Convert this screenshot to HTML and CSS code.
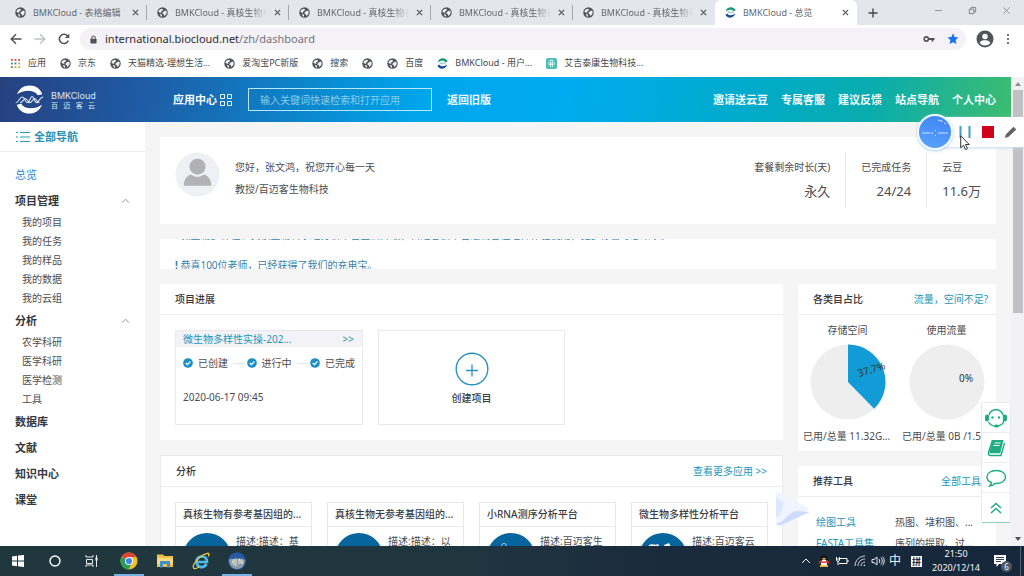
FILE: index.html
```html
<!DOCTYPE html>
<html lang="zh-CN">
<head>
<meta charset="utf-8">
<title>BMKCloud - 总览</title>
<link rel="stylesheet" href="styles.css">
</head>
<body>
<svg class="defs" aria-hidden="true">
  <symbol id="globe" viewBox="0 0 16 16"><circle cx="8" cy="8" r="7.6" fill="#50545a"/><path d="M3 4.5 6.5 2.500 9 3.500 7.800 5.500 6 6.200 6.500 8 4.500 8.300 2 7zM9.500 6.500l3-1.500 1.800 2-1 3.500-2.500 2.500-1-2.500-2.300-1.500zM4 10l3 .800.500 2.700-1.500.700z" fill="#edf0f3"/></symbol>
  <symbol id="brand" viewBox="0 0 16 16"><path d="M1 6.500C2 2.500 5 .5 8.500.5c3.500 0 6 2 6.800 5L12 6C10.500 3.500 5 3 1 6.500z" fill="#159a72"/><path d="M15 9.500c-1 4-4 6-7.500 6-3.500 0-6-2-6.800-5L4 10c1.500 2.500 7 3 11-.500z" fill="#1749a0"/><path d="M3.500 9 6 6.700 8 9l2-2.300L12.500 9" fill="none" stroke="#2b8dae"/></symbol>
  <symbol id="close" viewBox="0 0 8 8"><path d="M1 1l6 6M7 1 1 7" stroke="currentColor" stroke-width="1.300"/></symbol>
  <symbol id="check" viewBox="0 0 12 12"><circle cx="6" cy="6" r="5.800" fill="#1b8fc6"/><path d="M3.300 6 5.300 8l3.600-3.800" fill="none" stroke="#fff" stroke-width="1.500"/></symbol>
  <symbol id="up" viewBox="0 0 10 6"><path d="M1 5l4-4 4 4" fill="none" stroke="currentColor"/></symbol>
</svg>

<header class="browser">
  <nav class="tabs" aria-label="标签页">
    <div class="tab"><svg class="fav"><use href="#globe"/></svg><span class="tab-name">BMKCloud - 表格编辑</span><button class="tab-close" aria-label="关闭"><svg><use href="#close"/></svg></button></div>
    <div class="tab"><svg class="fav"><use href="#globe"/></svg><span class="tab-name">BMKCloud - 真核生物有</span><button class="tab-close" aria-label="关闭"><svg><use href="#close"/></svg></button></div>
    <div class="tab"><svg class="fav"><use href="#globe"/></svg><span class="tab-name">BMKCloud - 真核生物有</span><button class="tab-close" aria-label="关闭"><svg><use href="#close"/></svg></button></div>
    <div class="tab"><svg class="fav"><use href="#globe"/></svg><span class="tab-name">BMKCloud - 真核生物有</span><button class="tab-close" aria-label="关闭"><svg><use href="#close"/></svg></button></div>
    <div class="tab last"><svg class="fav"><use href="#globe"/></svg><span class="tab-name">BMKCloud - 真核生物有</span><button class="tab-close" aria-label="关闭"><svg><use href="#close"/></svg></button></div>
    <div class="tab active"><svg class="fav"><use href="#brand"/></svg><span class="tab-name">BMKCloud - 总览</span><button class="tab-close" aria-label="关闭"><svg><use href="#close"/></svg></button></div>
    <button class="new-tab" aria-label="新标签页"><svg viewBox="0 0 10 10"><path d="M5 .5v9M.5 5h9" stroke="#45494d" stroke-width="1.400"/></svg></button>
    <div class="window-controls">
      <button aria-label="最小化"><svg viewBox="0 0 10 10"><path d="M1 5h8" stroke="#8b8f94"/></svg></button>
      <button aria-label="还原"><svg viewBox="0 0 10 10"><path d="M1.500 3.500h5v5h-5zM3.500 3.500v-2h5v5h-2" fill="none" stroke="#777b80"/></svg></button>
      <button aria-label="关闭窗口"><svg viewBox="0 0 10 10"><path d="M1.500 1.500l7 7M8.500 1.500l-7 7" stroke="#8b8f94"/></svg></button>
    </div>
  </nav>
  <div class="address-row">
    <button class="nav-btn" aria-label="后退"><svg viewBox="0 0 12 12"><path d="M11.500 6H1.500M6 1.200 1.200 6 6 10.800" fill="none" stroke="#4d5156" stroke-width="1.400"/></svg></button>
    <button class="nav-btn" aria-label="前进"><svg viewBox="0 0 12 12"><path d="M.5 6h10M6 1.200 10.800 6 6 10.800" fill="none" stroke="#bfc2c6" stroke-width="1.400"/></svg></button>
    <button class="nav-btn" aria-label="重新加载"><svg viewBox="0 0 12 12"><path d="M10.300 7.500A4.600 4.600 0 1 1 9.500 3" fill="none" stroke="#4d5156" stroke-width="1.500"/><path d="M11.300.500v4.400H6.900z" fill="#4d5156"/></svg></button>
    <div class="omnibox">
      <svg class="lock" viewBox="0 0 8 10"><path d="M2 4.500V3a2 2 0 0 1 4 0v1.500" fill="none" stroke="#50545a" stroke-width="1.200"/><rect x=".5" y="4" width="7" height="5.500" rx=".7" fill="#50545a"/></svg>
      <span class="url">international.biocloud.net<span class="url-path">/zh/dashboard</span></span>
      <svg class="key" viewBox="0 0 12 8"><circle cx="3.300" cy="4" r="2.100" fill="none" stroke="#50545a" stroke-width="1.600"/><path d="M5.500 4H11.500M9.500 4v2.500" stroke="#50545a" stroke-width="1.800"/></svg>
      <svg class="star" viewBox="0 0 12 12"><path d="M6 .3l1.600 3.700 4 .4-3 2.700.8 4L6 9.200l-3.400 1.900.8-4-3-2.700 4-.4z" fill="#1a73e8"/></svg>
    </div>
    <button class="profile" aria-label="用户"><svg viewBox="0 0 18 18"><circle cx="9" cy="9" r="8.500" fill="#50545a"/><circle cx="9" cy="6.500" r="2.700" fill="#fff"/><path d="M3.700 13.200C4.500 10.500 7 10.300 9 10.300s4.500.200 5.300 2.900A7 7 0 0 1 9 15.500a7 7 0 0 1-5.300-2.300z" fill="#fff"/></svg></button>
    <button class="menu" aria-label="菜单"><svg viewBox="0 0 4 12"><circle cx="2" cy="2" r="1.100"/><circle cx="2" cy="6" r="1.100"/><circle cx="2" cy="10" r="1.100"/></svg></button>
  </div>
  <nav class="bookmarks" aria-label="书签">
    <a href="#"><svg class="apps" viewBox="0 0 12 12"><path d="M1 1h2v2H1zM5 1h2v2H5zM9 1h2v2H9z" fill="#d5483c"/><path d="M1 5h2v2H1z" fill="#389a5a"/><path d="M5 5h2v2H5z" fill="#2f77d4"/><path d="M9 5h2v2H9z" fill="#e0a02c"/><path d="M1 9h2v2H1z" fill="#389a5a"/><path d="M5 9h2v2H5zM9 9h2v2H9z" fill="#dda02e"/></svg>应用</a>
    <a href="#"><svg><use href="#globe"/></svg>京东</a>
    <a href="#"><svg><use href="#globe"/></svg>天猫精选-理想生活...</a>
    <a href="#"><svg><use href="#globe"/></svg>爱淘宝PC新版</a>
    <a href="#"><svg><use href="#globe"/></svg>搜索</a>
    <a href="#" aria-label="书签"><svg><use href="#globe"/></svg></a>
    <a href="#"><svg><use href="#globe"/></svg>百度</a>
    <a href="#"><svg><use href="#brand"/></svg>BMKCloud - 用户...</a>
    <a href="#"><svg viewBox="0 0 12 12"><rect width="12" height="12" rx="2" fill="#50bdb5"/><path d="M4.500 2.500h3v3h-3zM5 5.500v4.500M7 5.500v4.500M3 5v2h6V5" fill="none" stroke="#e5f8f5"/></svg>艾吉泰康生物科技...</a>
  </nav>
</header>

<div class="viewport">
  <div class="page">
    <header class="site-header">
      <a class="logo" href="#" aria-label="BMKCloud 百迈客云">
        <svg viewBox="0 0 28 28"><path d="M2 9C4 3.500 8.500.5 14 .5c6 0 10.500 3.200 12.300 8.500L22 10C19 4.500 9 4 2 9zM26 19c-2 5.500-6.500 8.500-12 8.500-6 0-10.500-3.200-12.300-8.500L6 18c3 5.500 13 6 20 1z" fill="#fff"/><path d="M.8 17c3 0 3.500-5.500 6.200-5.500S9.500 17 12 17s2.500-6 4.500-6 2 6 4.500 6 2.500-5.500 6.200-5.500M5 17c2.500 0 3.500-4 5-4s2.500 4 4.500 4 3-4 4.500-4 2.500 4 4.500 4" fill="none" stroke="#dfeaf6"/></svg>
        <span class="logo-text"><span class="logo-en">BMKCloud</span><span class="logo-cn"><i>百</i><i>迈</i><i>客</i><i>云</i></span></span>
      </a>
      <a class="app-center" href="#">应用中心 <svg viewBox="0 0 12 12"><path d="M.5.5h4v4h-4zM7.500.5h4v4h-4zM.5 7.500h4v4h-4zM7.500 7.500h4v4h-4z" fill="none" stroke="#e6f7ff"/></svg></a>
      <input class="search" type="text" placeholder="输入关键词快速检索和打开应用" aria-label="搜索应用">
      <a class="old-version" href="#">返回旧版</a>
      <nav class="site-links">
        <a href="#">邀请送云豆</a><a href="#">专属客服</a><a href="#">建议反馈</a><a href="#">站点导航</a><a href="#">个人中心</a>
      </nav>
    </header>
    <div class="body">
      <aside class="sidebar">
        <a class="all-nav" href="#"><svg viewBox="0 0 14 12"><path d="M0 1.500h2M4 1.500h10M0 6h2M4 6h10M0 10.500h2M4 10.500h10" stroke="#2a9abb" stroke-width="1.200"/></svg>全部导航</a>
        <nav class="side-nav">
          <a class="leaf current" href="#">总览</a>
          <button class="group">项目管理<svg><use href="#up"/></svg></button>
          <a class="sub" href="#">我的项目</a><a class="sub" href="#">我的任务</a><a class="sub" href="#">我的样品</a><a class="sub" href="#">我的数据</a><a class="sub" href="#">我的云组</a>
          <button class="group">分析<svg><use href="#up"/></svg></button>
          <a class="sub" href="#">农学科研</a><a class="sub" href="#">医学科研</a><a class="sub" href="#">医学检测</a><a class="sub" href="#">工具</a>
          <a class="leaf" href="#">数据库</a><a class="leaf" href="#">文献</a><a class="leaf" href="#">知识中心</a><a class="leaf" href="#">课堂</a>
        </nav>
      </aside>
      <main class="main">
        <section class="card welcome">
          <svg class="avatar" viewBox="0 0 46 46"><circle cx="23" cy="23" r="22.500" fill="#eff0f3"/><circle cx="23" cy="15" r="8.200" fill="#b2b2b4"/><path d="M9 34.500c0-6 3-10.500 7.500-11.500 4 3.200 9 3.200 13 0 4.500 1 7.500 5.500 7.500 11.500z" fill="#b2b2b4"/></svg>
          <div class="greeting"><p>您好，张文鸿，祝您开心每一天</p><p>教授/百迈客生物科技</p></div>
          <dl class="stats">
            <div class="right"><dt>套餐剩余时长(天)</dt><dd>永久</dd></div>
            <div class="right"><dt>已完成任务</dt><dd>24/24</dd></div>
            <div><dt>云豆</dt><dd>11.6万</dd></div>
          </dl>
        </section>
        <section class="card notice">
          <ul>
            <li><b>!</b> 微生物多样性、真核生物转录组分析平台全新升级，百迈客云平台邀请各位老师体验使用，更多惊喜等您来拿。</li>
            <li><b>!</b> 恭喜100位老师，已经获得了我们的充电宝。</li>
          </ul>
        </section>
        <div class="columns">
          <div class="column">
            <section class="card progress">
              <h2 class="card-head">项目进展</h2>
              <div class="projects">
                <article class="project">
                  <a class="project-head" href="#"><span>微生物多样性实操-202...</span><span>&gt;&gt;</span></a>
                  <ol class="steps"><li><svg><use href="#check"/></svg>已创建</li><li><svg><use href="#check"/></svg>进行中</li><li><svg><use href="#check"/></svg>已完成</li></ol>
                  <time>2020-06-17 09:45</time>
                </article>
                <button class="project create"><svg viewBox="0 0 34 34"><circle cx="17" cy="17" r="15.800" fill="none" stroke="#2a94bd" stroke-width="1.400"/><path d="M17 12.500v12M11 18.500h12" stroke="#2a94bd" stroke-width="1.300"/></svg>创建项目</button>
              </div>
            </section>
            <section class="card analysis">
              <h2 class="card-head">分析<a href="#">查看更多应用 &gt;&gt;</a></h2>
              <div class="platforms">
                <article class="platform"><h3>真核生物有参考基因组的...</h3><div class="platform-body"><svg viewBox="0 0 48 48"><circle cx="24" cy="24" r="24" fill="#06659c"/><path d="M12 18c4-6 8-4 12 0s9 4 13-2" fill="none" stroke="#1c577d" stroke-width="2"/></svg><p>描述:描述：基</p></div></article>
                <article class="platform"><h3>真核生物无参考基因组的...</h3><div class="platform-body"><svg viewBox="0 0 48 48"><circle cx="24" cy="24" r="24" fill="#06659c"/></svg><p>描述:描述：以</p></div></article>
                <article class="platform"><h3>小RNA测序分析平台</h3><div class="platform-body"><svg viewBox="0 0 48 48"><circle cx="24" cy="24" r="24" fill="#06659c"/><path d="M15 14c-2-4 5-5 4-1s-2 3-1 6 5 3 6 6" fill="none" stroke="#b6d7e8"/></svg><p>描述:百迈客生</p></div></article>
                <article class="platform"><h3>微生物多样性分析平台</h3><div class="platform-body"><svg viewBox="0 0 48 48"><circle cx="24" cy="24" r="24" fill="#06659c"/><path d="M10 12c4-2 6 1 9-1l3 5-8 5-5-3zM25 12l5-2 3 6-4 6z" fill="#f4fafd"/></svg><p>描述:百迈客云</p></div></article>
              </div>
            </section>
          </div>
          <div class="column">
            <section class="card usage">
              <h2 class="card-head">各类目占比<a href="#">流量，空间不足?</a></h2>
              <div class="charts">
                <figure><p>存储空间</p><svg viewBox="0 0 76 76"><circle cx="38" cy="38" r="37.500" fill="#eeeeef"/><path d="M38 38V.5A37.500 37.500 0 0 1 64.200 64.800z" fill="#129bd7"/><text x="49" y="33" transform="rotate(-17 49 33)">37.7%</text></svg><figcaption>已用/总量 11.32G...</figcaption></figure>
                <figure><p>使用流量</p><svg viewBox="0 0 76 76"><circle cx="38" cy="38" r="37.500" fill="#eeeeef"/><text x="50" y="38">0%</text></svg><figcaption>已用/总量 0B /1.5...</figcaption></figure>
              </div>
            </section>
            <section class="card tools">
              <h2 class="card-head">推荐工具<a href="#">全部工具</a></h2>
              <ul><li><a href="#">绘图工具</a><span>热图、堆积图、...</span></li><li><a href="#">FASTA工具集</a><span>序列的提取、过...</span></li></ul>
            </section>
          </div>
        </div>
      </main>
    </div>
    <svg class="watermark" viewBox="0 0 200 36" aria-hidden="true"><path d="M0 0 34 18 0 34z" fill="#f0f4fe"/><path d="M0 32c8 1 10-9 20-12l14 1L3 35z" fill="#cbdcfd"/><path d="M0 6v20c6-1 6-10 8-14z" fill="#dce8fe"/><path d="M36 3h9v2h-9zM53 3h7v2h-7zM88 3h9v2h-9zM125 3h8v2h-8zM138 3h12v2h-12zM66 3h4v2h-4zM61 24h5v3h-5zM70 29h4v3h-4zM121 25h5v2h-5zM138 25h3v2h-3zM150 29h5v2h-5z" fill="#fff"/></svg>
    <div class="floating">
      <button aria-label="客服"><svg viewBox="0 0 22 22"><path d="M4 8a7.300 7.300 0 0 1 14 0M3.500 15A8 8 0 0 0 11 19" fill="none" stroke="#1fac80" stroke-width="1.300"/><path d="M18.500 8v6.500c0 2.500-4 4-6.500 4.500" fill="none" stroke="#1fac80" stroke-width="1.300"/><rect y="7.500" width="4" height="7" rx="2" fill="#1fac80"/><rect x="18" y="7.500" width="4" height="7" rx="2" fill="#1fac80"/><circle cx="7.500" cy="10.500" r="1.200" fill="#1fac80"/><circle cx="14" cy="10.500" r="1.200" fill="#1fac80"/><ellipse cx="11.500" cy="19" rx="2.500" ry="1.500" fill="#1fac80"/></svg></button>
      <button aria-label="文档"><svg viewBox="0 0 22 22"><path d="M7.500 3h11L15.500 15H4.500z" fill="#1fac80"/><path d="M7.500 3 3.500 15.500c-.5 2 .5 3 2 3H16L19.500 6M4.500 15.500H15.500" fill="none" stroke="#1fac80" stroke-width="1.400"/><path d="M9.500 6h6M8.500 8.500h6" stroke="#fff" stroke-width="1.200"/></svg></button>
      <button aria-label="留言"><svg viewBox="0 0 22 22"><path d="M6.500 15.500C3 14.500 2 12 2 10c0-4 4-6.500 9.300-6.500S20.500 6 20.500 10s-4 6.500-9.200 6.500h-1.500C8.500 18 6.500 19 4.500 19c1.200-1 2-2 2-3.500z" fill="none" stroke="#1fac80" stroke-width="1.400"/></svg></button>
      <button aria-label="返回顶部"><svg viewBox="0 0 22 22"><path d="M6 11l5-4.500 5 4.500M6 16l5-4.500 5 4.500" fill="none" stroke="#1fac80" stroke-width="1.500"/></svg></button>
    </div>
  </div>
  <div class="scrollbar" aria-hidden="true"><svg viewBox="0 0 8 6"><path d="M1 5l3-4 3 4z" fill="#8d8d90"/></svg><div class="track"><div class="thumb"></div></div><svg viewBox="0 0 8 6"><path d="M1 1l3 4 3-4z" fill="#505052"/></svg></div>
  <div class="recorder">
    <div class="timer"><svg viewBox="0 0 32 32"><path d="M3 17h8M12 17h2M19 17h10M16.500 14v1M16.500 19v1M19 4l5 1.500M25 7l2 1" stroke="#cfe4ff" fill="none"/></svg></div>
    <button aria-label="暂停"><svg viewBox="0 0 12 12"><path d="M1.500 0v12M10.500 0v12" stroke="#3ba1bf" stroke-width="2"/></svg></button>
    <button aria-label="停止"><svg viewBox="0 0 12 12"><path d="M0 0h12v12H0z" fill="#d0021b"/></svg></button>
    <button aria-label="标注"><svg viewBox="0 0 12 12"><path d="M0 12l.8-3.500L8.500.8l2.800 2.700-8 7.500z" fill="#606267"/></svg></button>
    <svg class="cursor" viewBox="0 0 10 16"><path d="M.7.8v12l2.800-2.600 2 4.500 2-1-2-4.200h3.800z" fill="#fff" stroke="#333"/></svg>
  </div>
</div>

<footer class="taskbar">
  <div class="launchers">
    <button aria-label="开始"><svg viewBox="0 0 18 18"><path d="M3 4.500l5-.700v4.700H3zM9 3.600 15 3v5.500H9zM3 9.500h5v4.700l-5-.700zM9 9.500h6V15l-6-.700z" fill="#fff"/></svg></button>
    <button aria-label="搜索"><svg viewBox="0 0 18 18"><circle cx="9" cy="9" r="5" fill="none" stroke="#fff" stroke-width="1.400"/></svg></button>
    <button aria-label="任务视图"><svg viewBox="0 0 18 18"><path d="M3 3v2h7V3M3.500 7.500h6v4h-6zM3 15v-2h7v2M13.500 3v12" fill="none" stroke="#e5eaec"/><path d="M12.500 5.500h2v3h-2z" fill="#fff"/></svg></button>
    <button class="running" aria-label="Chrome"><svg viewBox="0 0 18 18"><circle cx="9" cy="9" r="8.500" fill="#f2bf2e"/><path d="M9 9 1.600 4.700A8.500 8.500 0 0 1 16.400 5H9z" fill="#dc4437"/><path d="M1.600 4.700A8.500 8.500 0 0 0 8.500 17.500L12 11z" fill="#2b9d56"/><circle cx="9" cy="9" r="4" fill="#fff"/><circle cx="9" cy="9" r="3.100" fill="#4285e8"/></svg></button>
    <button aria-label="文件资源管理器"><svg viewBox="0 0 18 18"><path d="M1 2.500h6l1.500 1.500H17v11H1z" fill="#f4bf42"/><path d="M1 6h16v6H1z" fill="#fbd978"/><path d="M4 9h10v6.500h-3V12H7v3.500H4z" fill="#3b91c9"/></svg></button>
    <button aria-label="Internet Explorer"><svg viewBox="0 0 18 18"><path d="M14.500 12c-3 5-10 3.500-10-2.500C4.500 3 15 2.500 15 10H5" fill="none" stroke="#4fbbe9" stroke-width="2.700"/><path d="M2 16.500C-1 14 7 3 15.500 1.300c2.200-.300 1.500 2 .7 3.200M2 16.500c1.500.700 3.500-.500 5-1.500" fill="none" stroke="#e8c94a" stroke-width="1.300"/></svg></button>
    <button class="running" aria-label="录屏"><svg viewBox="0 0 18 18"><circle cx="9" cy="9" r="8.800" fill="#2b5aa5"/><path d="M1 8c3-3 5 1 8-1s5 0 8 1c0 5-3 9-8 9S1 13 1 8z" fill="#8b9eae"/><path d="M4 11l2-4v6M8 6v8M11 12V7l3 5V7" fill="none" stroke="#f3ead0"/></svg></button>
  </div>
  <div class="tray">
    <svg class="small" viewBox="0 0 10 10"><path d="M1 7l4-4 4 4" fill="none" stroke="#fff"/></svg>
    <svg viewBox="0 0 14 14"><ellipse cx="7" cy="6" rx="4" ry="5" fill="#15171a"/><ellipse cx="7" cy="9" rx="3" ry="3.500" fill="#fff"/><path d="M3 6c3 2 5 2 8 0v2c-3 1.500-5 1.500-8 0z" fill="#df3328"/><ellipse cx="7" cy="4.800" rx="2" ry=".8" fill="#f4b83b"/><path d="M3 12h3.500M7.500 12H11" stroke="#f4b83b" stroke-width="1.800"/><path d="M3 7l-1 3M11 7l1 3" stroke="#df3328"/></svg>
    <svg viewBox="0 0 14 14"><path d="M5 4.500h7v5H4M13 6v2" fill="none" stroke="#fff"/><path d="M1.500 3v3.500c0 1 3 1 3 0V3M1 5h4M3 7v4" fill="none" stroke="#fff"/></svg>
    <svg viewBox="0 0 14 14"><path d="M2 12C2 6.500 6.500 2 12 2M5 12c0-4 3-7 7-7M8 12c0-2.500 2-4 4-4" fill="none" stroke="#c8d0d6"/><path d="M10.500 12a1.500 1.500 0 0 1 1.500-1.500V12z" fill="#fff"/></svg>
    <svg viewBox="0 0 14 14"><path d="M1 5.500h2L6 3v8L3 8.500H1zM8 5c1 1 1 3 0 4M9.800 3.500c2 2 2 5 0 7M11.700 2.500c2 3 2 6 0 9" fill="none" stroke="#e7ecf0"/></svg>
    <span class="ime">中</span><span class="ime-mode">拼</span>
    <div class="clock"><time>21:50</time><time>2020/12/14</time></div>
    <button class="notifications" aria-label="6 条通知"><svg viewBox="0 0 14 14"><path d="M1 1h12v9H6l-2.500 3v-3H1z" fill="#fff"/><path d="M3 3.500h8M3 5.500h8M3 7.500h5" stroke="#33404d"/></svg><span>6</span></button>
  </div>
</footer>
</body>
</html>
```
FILE: styles.css
```css
* { box-sizing: border-box; }
body {
  margin: 0;
  height: 100vh;
  display: flex;
  flex-direction: column;
  overflow: hidden;
  font-family: "Noto Sans", "Noto Sans CJK SC", sans-serif;
  font-size: 10px;
  line-height: 16px;
  color: #4c4c4f;
  background: #fff;
}
a { color: inherit; text-decoration: none; }
button { font: inherit; color: inherit; background: none; border: 0; padding: 0; }
p, h2, h3, ul, ol, dl, dd, figure { margin: 0; padding: 0; }
ul, ol { list-style: none; }
svg { display: block; flex: none; }
.defs { display: none; }

/* Browser chrome */
.browser { flex: none; font-size: 9px; }
.tabs { display: flex; height: 25px; padding-left: 5px; background: #e3e7eb; }
.tab { flex: 0 1 142px; display: flex; align-items: center; gap: 7px; min-width: 0; padding: 0 8px 0 10px; color: #65686d; position: relative; }
.tab:not(.active):not(.last)::after { content: ""; width: 1px; height: 15px; background: #a4a8ad; position: absolute; right: 0; }
.fav { width: 11px; height: 11px; }
.tab-name { flex: 1; overflow: hidden; white-space: nowrap; mask-image: linear-gradient(90deg, #000 82%, transparent); }
.tab:first-child .tab-name, .tab.active .tab-name { mask-image: none; }
.tab-close svg { width: 7px; height: 7px; color: #505459; }
.tab.active { background: #fff; border-radius: 6px 6px 0 0; }
.new-tab { width: 32px; display: grid; place-items: center; }
.new-tab svg { width: 10px; height: 10px; }
.window-controls { margin-left: auto; display: flex; align-items: center; gap: 25px; padding: 0 13px 4px 0; }
.window-controls svg { width: 9px; height: 9px; }
.address-row { display: flex; align-items: center; height: 28px; padding: 0 14px 0 10px; gap: 12px; }
.nav-btn svg { width: 12px; height: 12px; }
.omnibox { flex: 1; height: 22px; margin-left: -2px; padding: 0 7px 0 10px; display: flex; align-items: center; border-radius: 11px; background: #f5f2f7; }
.lock { width: 7px; height: 9px; margin-right: 8px; }
.url { flex: 1; font-size: 11px; color: #2b2d30; }
.url-path { color: #717479; }
.key { width: 12px; height: 8px; margin-right: 12px; }
.star { width: 12px; height: 12px; }
.profile { margin-left: -2px; }
.profile svg { width: 18px; height: 18px; }
.menu svg { width: 4px; height: 12px; fill: #50545a; }
.bookmarks { display: flex; align-items: center; gap: 14px; height: 24px; padding: 0 10px 4px; color: #45474a; white-space: nowrap; }
.bookmarks a { display: flex; align-items: center; gap: 7px; }
.bookmarks svg { width: 11px; height: 11px; }

/* Page frame */
.viewport { flex: 1; min-height: 0; display: flex; position: relative; }
.page { flex: 1; min-width: 0; display: flex; flex-direction: column; overflow: hidden; position: relative; }
.site-header {
  flex: none; height: 45px; padding: 0 15px; display: flex; align-items: center;
  font-size: 11px; font-weight: 700; color: #f4fbff;
  background: linear-gradient(100deg, #26417f 0%, #1f5ba4 14%, #0c86cc 30%, #00a6ec 42%, #00abef 56%, #00abca 74%, #09acad 86%, #3ebc70 100%);
}
.logo { display: flex; align-items: center; gap: 7px; width: 158px; font-weight: 400; color: #dce8f4; }
.logo svg { width: 29px; height: 29px; }
.logo-text { width: 44px; }
.logo-en { display: block; font: 9px/11px Inter, sans-serif; }
.logo-cn { display: flex; justify-content: space-between; font-size: 7px; line-height: 9px; }
.logo-cn i { font-style: normal; }
.app-center { display: flex; align-items: center; gap: 3px; width: 75px; }
.app-center svg { width: 12px; height: 12px; }
.search { width: 184px; height: 23px; padding: 0 11px; border: 1px solid #b9e8fb; border-radius: 0; outline: 0; background: transparent; font: 10px/16px "Noto Sans", "Noto Sans CJK SC", sans-serif; color: #fff; }
.search::placeholder { color: #8ccbe9; opacity: 1; }
.old-version { margin-left: 15px; }
.site-links { margin-left: auto; display: flex; gap: 13px; }
.body { flex: 1; min-height: 0; display: flex; background: #f5f5f6; }
.sidebar { flex: none; width: 145px; background: #fff; }
.all-nav { display: flex; align-items: center; gap: 4px; height: 30px; padding-left: 16px; border-bottom: 1px solid #ececee; font-size: 11px; font-weight: 700; color: #2c92b4; }
.all-nav svg { width: 14px; height: 12px; }
.side-nav { display: flex; flex-direction: column; padding: 10px 15px; font-size: 11px; }
.leaf { line-height: 26px; font-weight: 700; color: #36373a; }
.leaf.current { font-weight: 400; color: #2b86cf; }
.group { display: flex; align-items: center; justify-content: space-between; height: 25px; font-weight: 700; color: #36373a; }
.group svg { width: 9px; height: 6px; color: #8e8e92; }
.sub { padding-left: 7px; font-size: 10px; line-height: 19px; }
.main { flex: 1; min-width: 0; padding: 15px; display: flex; flex-direction: column; gap: 15px; }
.card { background: #fff; }

/* Welcome */
.welcome { flex: none; height: 87px; padding: 15px; display: flex; align-items: flex-start; }
.avatar { width: 45px; height: 45px; margin-right: 15px; }
.greeting p { line-height: 22px; }
.greeting { margin-top: 4px; }
.stats { margin-left: auto; display: flex; }
.stats div { height: 56px; padding: 4px 15px 0; border-left: 1px solid #e8eaec; }
.stats div:first-child { border-left: 0; }
.stats div:last-child { padding-right: 0; }
.stats .right { text-align: right; }
.stats dt { line-height: 22px; }
.stats dd { font-size: 13px; line-height: 26px; }
.notice { flex: none; height: 30px; padding: 0 15px; overflow: hidden; color: #367fa6; }
.notice ul { margin-top: -19px; }
.notice li { line-height: 30px; height: 30px; white-space: nowrap; overflow: hidden; }

/* Card columns */
.columns { display: grid; grid-template-columns: minmax(0, 1fr) 198px; gap: 15px; align-items: start; }
.column { display: flex; flex-direction: column; gap: 15px; }
.card-head { display: flex; justify-content: space-between; height: 31px; padding: 0 15px; border-bottom: 1px solid #ebecee; font-size: 10px; font-weight: 500; line-height: 31px; color: #36373a; }
.card-head a { font-weight: 400; color: #2595b8; }
.usage .card-head { padding-right: 8px; }
.projects { display: grid; grid-template-columns: 188px 187px; gap: 15px; padding: 15px; }
.project { height: 95px; border: 1px solid #e9e8ed; }
.project-head { display: flex; justify-content: space-between; padding: 0 8px 0 7px; background: #f3f2f6; color: #2595b8; }
.steps { display: flex; justify-content: space-between; padding: 8px 7px 18px; }
.steps li { display: flex; align-items: center; gap: 5px; }
.steps li:not(:last-child)::after { content: ""; width: 11px; height: 1px; background: #e6e6e9; }
.steps svg { width: 10px; height: 10px; }
.project time { padding-left: 7px; }
.create { display: flex; flex-direction: column; align-items: center; justify-content: center; gap: 4px; padding-top: 2px; font-weight: 500; color: #3b3c3f; }
.create svg { width: 34px; height: 34px; }
.analysis { border: 1px solid #e8ebed; }
.platforms { display: grid; grid-template-columns: repeat(4, minmax(0, 1fr)); gap: 15px; padding: 15px 14px; }
.platform { border: 1px solid #e6e9eb; height: 95px; }
.platform h3 { height: 24px; padding: 0 0 0 7px; border-bottom: 1px solid #e6e9eb; font-size: 10px; font-weight: 500; line-height: 23px; color: #3b3c3f; white-space: nowrap; }
.platform-body { display: flex; gap: 5px; padding: 6px 8px 0 7px; }
.platform-body svg { width: 48px; height: 48px; }
.platform-body p { white-space: nowrap; }
.charts { display: grid; grid-template-columns: 1fr 1fr; padding: 7px 0; }
.charts figure { display: flex; flex-direction: column; align-items: center; min-width: 0; padding: 0 5px; }
.charts svg { width: 76px; height: 76px; margin: 5px 0 8px; }
.charts text { font-size: 10px; fill: #33373b; }
.charts p { line-height: 17px; }
.charts figcaption { width: 100%; white-space: nowrap; }
.tools ul { padding: 15px 18px; }
.tools li { display: grid; grid-template-columns: 79px 1fr; line-height: 21px; white-space: nowrap; }
.tools li a { color: #2595b8; }

/* Overlays */
.watermark { position: absolute; right: 35px; bottom: 19px; width: 200px; height: 36px; }
.floating { position: absolute; right: 0; bottom: 23px; width: 30px; background: #fff; border: 1px solid #e8eaeb; border-bottom-color: #8bcfb9; border-radius: 2px; }
.floating button { display: grid; place-items: center; width: 100%; height: 29px; }
.floating button + button { height: 30px; border-top: 1px solid #ececee; }
.floating svg { width: 22px; height: 22px; }
.scrollbar { flex: none; width: 13px; display: flex; flex-direction: column; align-items: center; padding: 4px 0; background: #f2f1f4; }
.scrollbar svg { width: 8px; height: 6px; }
.track { flex: 1; width: 10px; padding-top: 3px; }
.thumb { height: 50%; background: #c1c0c4; }
.recorder { position: absolute; top: 40px; right: 0; height: 30px; width: 90px; display: flex; align-items: center; gap: 11px; padding: 0 2px 0 25px; background: #fff; box-shadow: 0 1px 3px #c5dbe7; }
.recorder button svg { width: 12px; height: 12px; }
.timer { position: absolute; left: -17px; top: -3px; width: 36px; height: 36px; border-radius: 50%; border: 2px solid #eff8ff; background: linear-gradient(20deg, #5aa4fb, #3d82f4); box-shadow: 0 1px 3px #a9cbe8; }
.cursor { position: absolute; left: 26px; top: 18px; width: 10px; height: 16px; }

/* Taskbar */
.taskbar { flex: none; height: 30px; display: flex; justify-content: space-between; background: linear-gradient(90deg, #21373e, #20363f 45%, #1a2b3d 65%, #17273b); color: #f5f7f8; position: relative; }
.launchers { display: flex; gap: 7px; padding-left: 3px; }
.launchers button { width: 30px; display: grid; place-items: center; }
.launchers button:nth-child(n+5) { margin-left: -1px; }
.launchers svg { width: 18px; height: 18px; }
.launchers .running { border-bottom: 2px solid #76b1e5; padding-top: 2px; }
.tray { display: flex; align-items: center; gap: 4px; padding-right: 3px; }
.tray svg { width: 14px; height: 14px; }
.tray .small { width: 10px; height: 10px; margin-right: 2px; }
.ime { font-size: 12px; }
.ime-mode { margin: 0 6px; width: 11px; font-size: 9px; line-height: 11px; text-align: center; background: #fff; color: #17273b; font-weight: 700; }
.clock { display: flex; flex-direction: column; align-items: center; font-size: 9px; line-height: 14px; }
.notifications { display: flex; align-items: center; margin-left: 9px; padding-right: 13px; position: relative; border-right: 1px solid #516070; height: 30px; }
.notifications svg { width: 14px; height: 14px; }
.notifications span { position: absolute; right: 8px; bottom: 4px; width: 11px; height: 11px; border-radius: 50%; background: #4b5866; font-size: 8px; line-height: 11px; text-align: center; }
```
